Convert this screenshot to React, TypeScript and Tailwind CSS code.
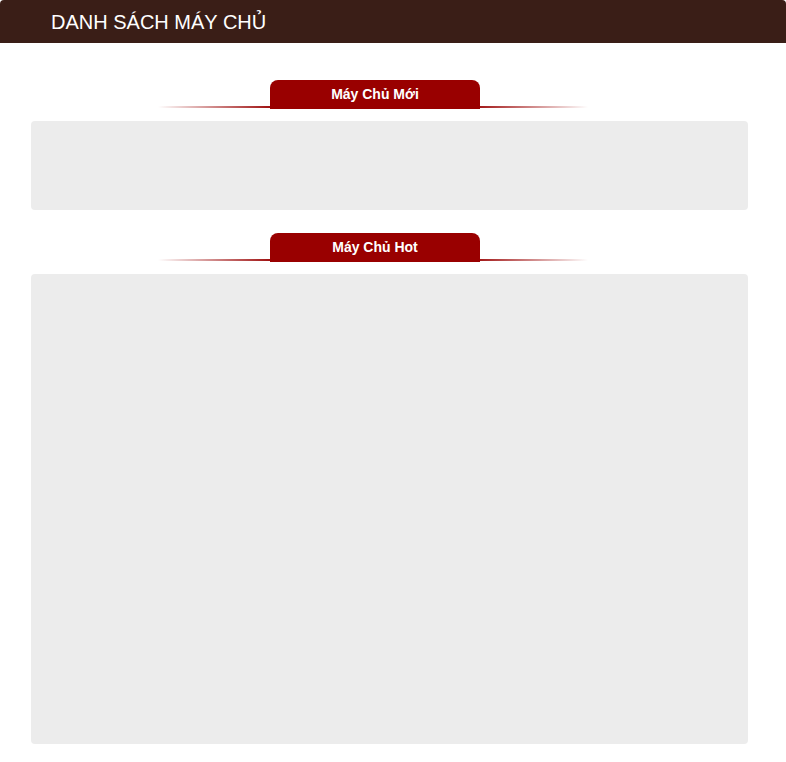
import React from "react";

function SectionTitle({ title }: { title: string }) {
  return (
    <div className="ml-[127px] w-[430px] relative h-[29px] flex">
      <div className="absolute left-0 right-0 bottom-[1px] h-[2px] bg-[linear-gradient(to_right,rgba(153,0,0,0)_0%,#990000_28%,#990000_72%,rgba(153,0,0,0)_100%)]" />
      <div className="relative ml-[112px] w-[210px] h-[29px] bg-[#990000] rounded-t-[8px] text-white font-bold text-[14px] leading-[29px] text-center">
        {title}
      </div>
    </div>
  );
}

export default function App() {
  return (
    <div className="w-[786px] h-[762px] bg-white rounded-[4px] overflow-hidden font-['Liberation_Sans',Arial,sans-serif]">
      <div className="h-[43px] bg-[#3a1e17] text-white text-[20px] leading-[45px] pl-[51px]">
        DANH SÁCH MÁY CHỦ
      </div>
      <div className="pt-[37px] pl-[31px] pr-[38px] pb-[18px] flex flex-col">
        <SectionTitle title="Máy Chủ Mới" />
        <div className="mt-[12px] h-[89px] bg-[#ececec] rounded-[4px]" />
        <div className="mt-[23px]">
          <SectionTitle title="Máy Chủ Hot" />
        </div>
        <div className="mt-[12px] h-[470px] bg-[#ececec] rounded-[4px]" />
      </div>
    </div>
  );
}
